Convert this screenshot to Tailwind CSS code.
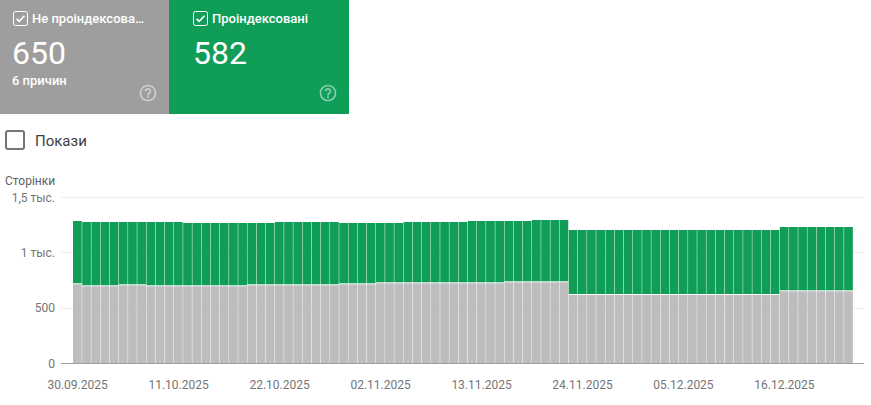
<!DOCTYPE html>
<html>
<head>
    <meta charset="UTF-8">
    <title>Покриття</title>
    <script src="https://cdn.jsdelivr.net/npm/@tailwindcss/browser@4"></script>
</head>
<body class="bg-white font-['Roboto',sans-serif] overflow-hidden">
    <!-- Summary cards -->
    <div class="flex">
        <div class="relative w-[169px] h-[114px] bg-[#9e9e9e] text-white pl-[13px] pt-[11px]">
            <div class="flex items-center gap-[4px] h-[15px]">
                <svg class="w-[15px] h-[15px] shrink-0" viewBox="0 0 15 15" fill="none">
                    <rect x="0.5" y="0.5" width="14" height="14" rx="2" stroke="white"/>
                    <path d="M3.5 7.8 L6.2 10.4 L11.5 4.8" stroke="white" stroke-width="1.6"/>
                </svg>
                <span class="whitespace-nowrap text-[13px] font-medium leading-[15px]">Не проіндексова…</span>
            </div>
            <div class="text-[32px] leading-[38px] mt-[8px] -ml-[1px]">650</div>
            <div class="text-[13px] font-medium leading-[16px] mt-[1px] -ml-[1px]">6 причин</div>
            <svg class="absolute left-[138px] top-[83px] w-[20px] h-[20px] fill-white/50" viewBox="0 0 24 24"><path d="M11 18h2v-2h-2v2zm1-16C6.48 2 2 6.48 2 12s4.48 10 10 10 10-4.48 10-10S17.52 2 12 2zm0 18c-4.41 0-8-3.59-8-8s3.59-8 8-8 8 3.59 8 8-3.59 8-8 8zm0-14c-2.21 0-4 1.79-4 4h2c0-1.1.9-2 2-2s2 .9 2 2c0 2-3 1.75-3 5h2c0-2.25 3-2.5 3-5 0-2.21-1.79-4-4-4z"/></svg>
        </div>
        <div class="relative w-[180px] h-[114px] bg-[#109d58] text-white pl-[24px] pt-[11px]">
            <div class="flex items-center gap-[4px] h-[15px]">
                <svg class="w-[15px] h-[15px] shrink-0" viewBox="0 0 15 15" fill="none">
                    <rect x="0.5" y="0.5" width="14" height="14" rx="2" stroke="white"/>
                    <path d="M3.5 7.8 L6.2 10.4 L11.5 4.8" stroke="white" stroke-width="1.6"/>
                </svg>
                <span class="text-[13px] font-medium leading-[15px]">Проіндексовані</span>
            </div>
            <div class="text-[32px] leading-[38px] mt-[8px]">582</div>
            <svg class="absolute left-[149px] top-[83px] w-[20px] h-[20px] fill-white/50" viewBox="0 0 24 24"><path d="M11 18h2v-2h-2v2zm1-16C6.48 2 2 6.48 2 12s4.48 10 10 10 10-4.48 10-10S17.52 2 12 2zm0 18c-4.41 0-8-3.59-8-8s3.59-8 8-8 8 3.59 8 8-3.59 8-8 8zm0-14c-2.21 0-4 1.79-4 4h2c0-1.1.9-2 2-2s2 .9 2 2c0 2-3 1.75-3 5h2c0-2.25 3-2.5 3-5 0-2.21-1.79-4-4-4z"/></svg>
        </div>
    </div>

    <!-- Impressions toggle -->
    <div class="flex items-center gap-[10px] pl-[5px] mt-[16px] h-[20px]">
        <div class="w-[20px] h-[20px] border-2 border-[#757575] rounded-[3px]"></div>
        <span class="text-[15px] leading-[22px] pt-[1px] text-[#3c4043]">Покази</span>
    </div>

    <!-- Chart -->
    <svg id="chart" class="block mt-[15px] w-[871px] h-[240px] text-[12px]" viewBox="0 165 871 240">
        <text x="5" y="185" class="fill-[#616161]">Сторінки</text>
        <text x="55" y="202" text-anchor="end" class="fill-[#757575]">1,5 тыс.</text>
        <text x="55" y="257" text-anchor="end" class="fill-[#757575]">1 тыс.</text>
        <text x="55" y="312" text-anchor="end" class="fill-[#757575]">500</text>
        <text x="55" y="368" text-anchor="end" class="fill-[#757575]">0</text>
        <rect x="61" y="197" width="803" height="1" class="fill-[#eeeeee]"/>
        <rect x="61" y="252" width="803" height="1" class="fill-[#eeeeee]"/>
        <rect x="61" y="308" width="803" height="1" class="fill-[#eeeeee]"/>
        <rect x="61" y="363" width="803" height="1" class="fill-[#9e9e9e]"/>
        <g id="bars"></g>
        <g id="dates" class="fill-[#757575]" text-anchor="middle"></g>
    </svg>

    <script>
        const svgNs = 'http://www.w3.org/2000/svg';
        const barsGroup = document.getElementById('bars');
        const datesGroup = document.getElementById('dates');

        // [number of bars, y of green top, y of gray top]
        const segments = [
            [1, 221, 284.3], [4, 222, 286.3], [3, 222, 285.3], [4, 222, 286.3],
            [7, 223, 286.3], [3, 223, 285.3], [7, 222, 285.3], [4, 223, 284.3],
            [3, 223, 283.3], [7, 222, 283.3], [4, 221, 283.3], [3, 221, 282.3],
            [4, 220, 282.3], [23, 230, 295], [8, 227, 291.3]
        ];
        const step = 9.18;
        const baseY = 363;

        function addRect(x, y, w, h, cls) {
            const r = document.createElementNS(svgNs, 'rect');
            r.setAttribute('x', x);
            r.setAttribute('y', y);
            r.setAttribute('width', w);
            r.setAttribute('height', h);
            r.setAttribute('class', cls);
            barsGroup.appendChild(r);
        }

        let i = 0;
        segments.forEach(([count, greenTop, grayTop]) => {
            for (let n = 0; n < count; n++, i++) {
                const x = 73 + i * step;
                addRect(x, greenTop, step - 0.45, grayTop - 1 - greenTop, 'fill-[#109d58]');
                addRect(x, grayTop, step - 0.45, baseY - grayTop, 'fill-[#bdbdbd]');
            }
        });

        ['30.09.2025', '11.10.2025', '22.10.2025', '02.11.2025', '13.11.2025', '24.11.2025', '05.12.2025', '16.12.2025'].forEach((d, k) => {
            const t = document.createElementNS(svgNs, 'text');
            t.setAttribute('x', 73 + k * 11 * step + 4.6);
            t.setAttribute('y', 389);
            t.textContent = d;
            datesGroup.appendChild(t);
        });
    </script>
</body>
</html>
